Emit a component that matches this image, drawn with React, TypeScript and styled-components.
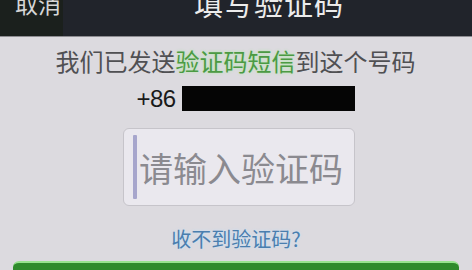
import React from "react";
import styled, { createGlobalStyle } from "styled-components";

const Global = createGlobalStyle`
  html, body { margin: 0; padding: 0; background: #dcdadf; }
  body { font-family: "Noto Sans CJK SC", "Noto Sans", sans-serif; }
  * { box-sizing: border-box; }
`;

const Screen = styled.div`
  width: 472px;
  height: 270px;
  overflow: hidden;
  display: flex;
  flex-direction: column;
  background: #dcdadf;
`;

const NavBar = styled.div`
  height: 37px;
  flex: none;
  display: flex;
  align-items: center;
  padding-left: 15px;
  background: linear-gradient(90deg, #1b201d 0, #1b201d 63px, #21242b 63px, #21242b 100%);
  border-bottom: 1px solid #8d8c91;
  overflow: hidden;
`;

const NavButton = styled.span`
  font-size: 23px;
  line-height: 23px;
  color: #d6d6d6;
  margin-top: -29px;
`;

const NavTitle = styled.span`
  font-size: 29px;
  line-height: 29px;
  color: #ececec;
  letter-spacing: 1px;
  margin-left: 133px;
  margin-top: -30px;
`;

const Body = styled.div`
  flex: 1;
  display: flex;
  flex-direction: column;
  align-items: center;
  padding-top: 10px;
`;

const Info = styled.div`
  font-size: 24px;
  line-height: 28px;
  color: #505053;
  margin-left: -1px;
`;

const Hl = styled.span`
  color: #4c9a44;
  text-shadow: 0 0 3px rgba(170, 235, 160, 0.9);
`;

const PhoneRow = styled.div`
  display: flex;
  align-items: center;
  gap: 6px;
  margin-top: 11px;
  margin-left: 19px;
  height: 25px;
`;

const Code = styled.span`
  font-family: "Liberation Sans", Arial, sans-serif;
  font-size: 24px;
  line-height: 25px;
  color: #1a1a1a;
  letter-spacing: -0.5px;
`;

const Masked = styled.div`
  width: 173px;
  height: 25px;
  background: #050505;
`;

const InputBox = styled.div`
  margin-top: 17px;
  margin-left: 6px;
  width: 232px;
  height: 78px;
  border: 1px solid #c6c4ca;
  border-radius: 6px;
  background: #eae8ee;
  display: flex;
  align-items: center;
  padding-left: 9px;
  gap: 2px;
`;

const Caret = styled.div`
  width: 4px;
  height: 64px;
  background: #a7a6cc;
  border-radius: 1px;
`;

const Placeholder = styled.span`
  font-size: 34px;
  line-height: 40px;
  color: #8b8a90;
  margin-top: 2px;
`;

const Link = styled.div`
  margin-top: 21px;
  font-size: 20px;
  line-height: 24px;
  color: #4a7eae;
  text-shadow: 0 0 3px rgba(190, 225, 255, 0.9);
`;

const PrimaryButton = styled.div`
  margin-top: 10px;
  width: 446px;
  height: 44px;
  flex: none;
  border-radius: 6px;
  background: #2f8b2c;
  border-top: 2px solid #98e38f;
`;

export default function App() {
  return (
    <Screen>
      <Global />
      <NavBar>
        <NavButton>取消</NavButton>
        <NavTitle>填写验证码</NavTitle>
      </NavBar>
      <Body>
        <Info>
          我们已发送<Hl>验证码短信</Hl>到这个号码
        </Info>
        <PhoneRow>
          <Code>+86</Code>
          <Masked />
        </PhoneRow>
        <InputBox>
          <Caret />
          <Placeholder>请输入验证码</Placeholder>
        </InputBox>
        <Link>收不到验证码?</Link>
        <PrimaryButton />
      </Body>
    </Screen>
  );
}
